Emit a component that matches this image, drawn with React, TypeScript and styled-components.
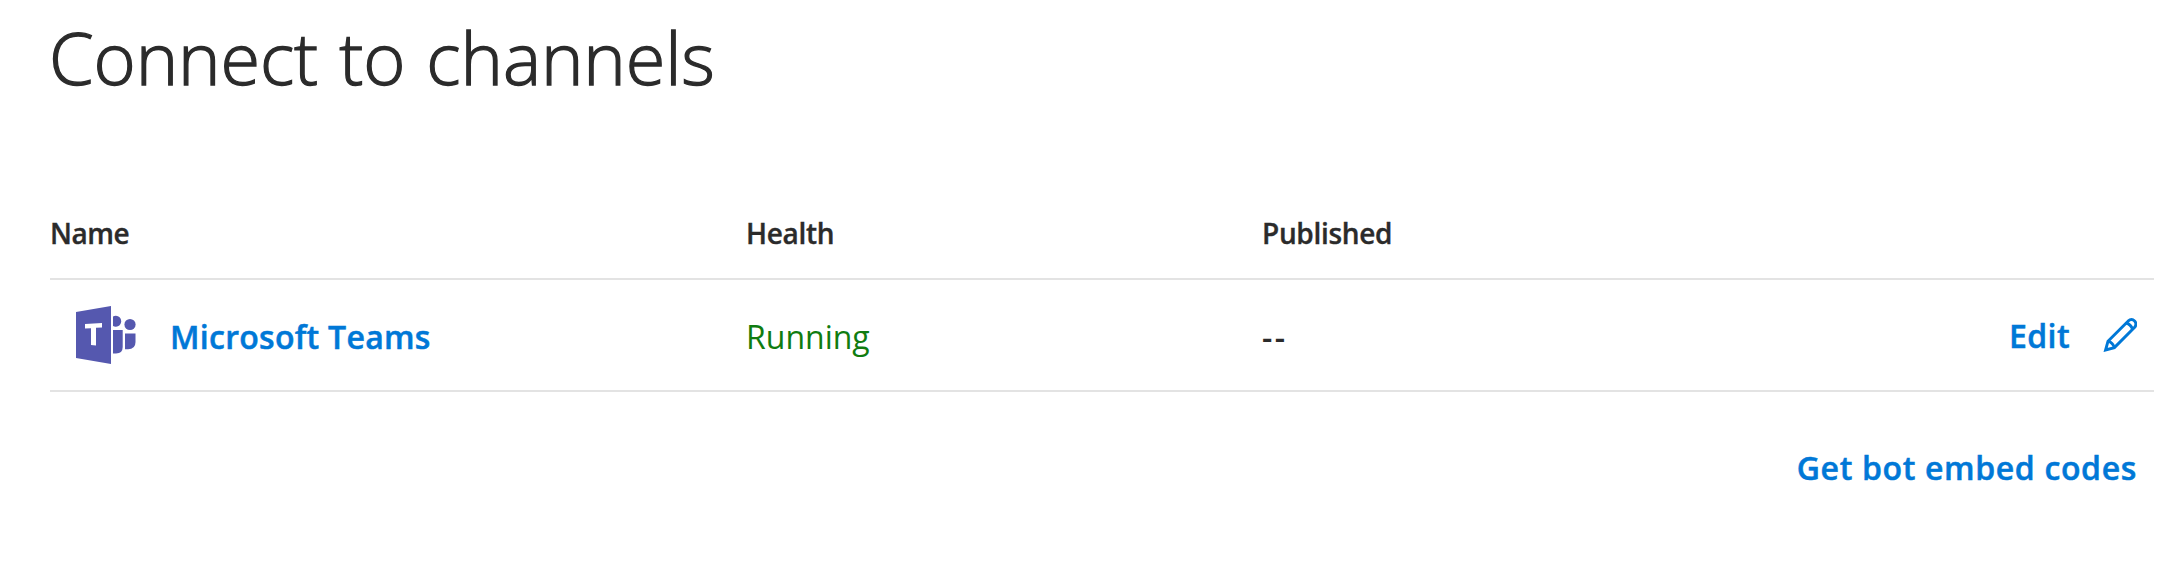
import React from 'react';
import styled, { createGlobalStyle } from 'styled-components';

const GlobalStyle = createGlobalStyle`
  body {
    margin: 0;
    background: #ffffff;
    color: #2b2b2b;
    font-family: 'Open Sans', 'Noto Sans', sans-serif;
  }
`;

const Page = styled.main`
  box-sizing: border-box;
  padding: 8px 30px 0 50px;
`;

const Title = styled.h1`
  margin: 0 0 96px -1px;
  font-size: 72px;
  line-height: 98px;
  font-weight: 300;
  -webkit-text-stroke: 1.3px currentColor;
  letter-spacing: -0.1px;
  word-spacing: 2.5px;
`;

const Table = styled.div`
  display: flex;
  flex-direction: column;
`;

const Row = styled.div<{ $height: number }>`
  display: grid;
  grid-template-columns: 696px 516px 1fr auto;
  align-items: center;
  height: ${(p) => p.$height}px;
  border-bottom: 2px solid #e3e3e3;
`;

const HeaderCell = styled.span<{ $tracking: number }>`
  font-size: 28px;
  line-height: 40px;
  font-weight: 600;
  -webkit-text-stroke: 0.35px currentColor;
  letter-spacing: ${(p) => p.$tracking}px;
  padding-bottom: 14px;
`;

const Cell = styled.span<{ $tracking?: number; $color?: string; $weight?: number }>`
  font-size: 32px;
  line-height: 44px;
  font-weight: ${(p) => p.$weight ?? 400};
  letter-spacing: ${(p) => p.$tracking ?? 0}px;
  color: ${(p) => p.$color ?? 'inherit'};
  padding-top: 4px;
`;

const NameCell = styled.div`
  display: flex;
  align-items: center;
  gap: 34px;
  padding-left: 26px;
`;

const Actions = styled.div`
  display: flex;
  align-items: center;
  gap: 33px;
  padding-right: 17px;
`;

const Link = styled.a<{ $tracking: number; $drop?: number }>`
  color: #0078d7;
  font-size: 32px;
  line-height: 44px;
  font-weight: 600;
  -webkit-text-stroke: 0.5px currentColor;
  letter-spacing: ${(p) => p.$tracking}px;
  text-decoration: none;
  white-space: nowrap;
  padding-top: ${(p) => p.$drop ?? 0}px;
`;

const Footer = styled.div`
  display: flex;
  justify-content: flex-end;
  padding: 54px 17px 0 0;
`;

const TeamsIcon = () => (
  <svg width="60" height="60" viewBox="0 0 60 60" fill="#5558af">
    <path d="M0 7 35 1V59L0 53Z" />
    <path fill="#ffffff" d="M9 19 26 18V22.5L20 22.8V40.5L15 40V23.2L9 23.5Z" />
    <path d="M37 11.4A5.5 5.5 0 1 1 37 21Z" />
    <circle cx="54" cy="19.5" r="5.6" />
    <path d="M37 25H46.7V42Q46.7 48.5 40 48.5H37Z" />
    <path d="M49 28.5H59.5V37Q59.5 44.2 52 44.2H49Z" />
  </svg>
);

const PencilIcon = () => (
  <svg
    width="34"
    height="34"
    viewBox="0 0 34 34"
    fill="none"
    stroke="#0078d7"
    strokeWidth="2.9"
    strokeLinejoin="miter"
  >
    <path d="M2.6 32 5 23.2 25 3.2Q28.6 0 31.6 3 34.4 6 31.4 9.6L11.4 29.6Z" />
    <path d="M5 23.2Q9.8 24.6 11.4 29.6M23.2 5Q28 6.4 29.6 11.4" />
  </svg>
);

export default function App() {
  return (
    <>
      <GlobalStyle />
      <Page>
        <Title>Connect to channels</Title>
        <Table>
          <Row $height={76}>
            <HeaderCell $tracking={-0.45}>Name</HeaderCell>
            <HeaderCell $tracking={-0.3}>Health</HeaderCell>
            <HeaderCell $tracking={-0.32}>Published</HeaderCell>
          </Row>
          <Row $height={110}>
            <NameCell>
              <TeamsIcon />
              <Link href="#" $tracking={0.28} $drop={4}>Microsoft Teams</Link>
            </NameCell>
            <Cell $color="#107c10">Running</Cell>
            <Cell $tracking={2.4} $weight={600}>--</Cell>
            <Actions>
              <Link href="#" $tracking={0.4} $drop={2}>Edit</Link>
              <PencilIcon />
            </Actions>
          </Row>
        </Table>
        <Footer>
          <Link href="#" $tracking={0.65}>Get bot embed codes</Link>
        </Footer>
      </Page>
    </>
  );
}
